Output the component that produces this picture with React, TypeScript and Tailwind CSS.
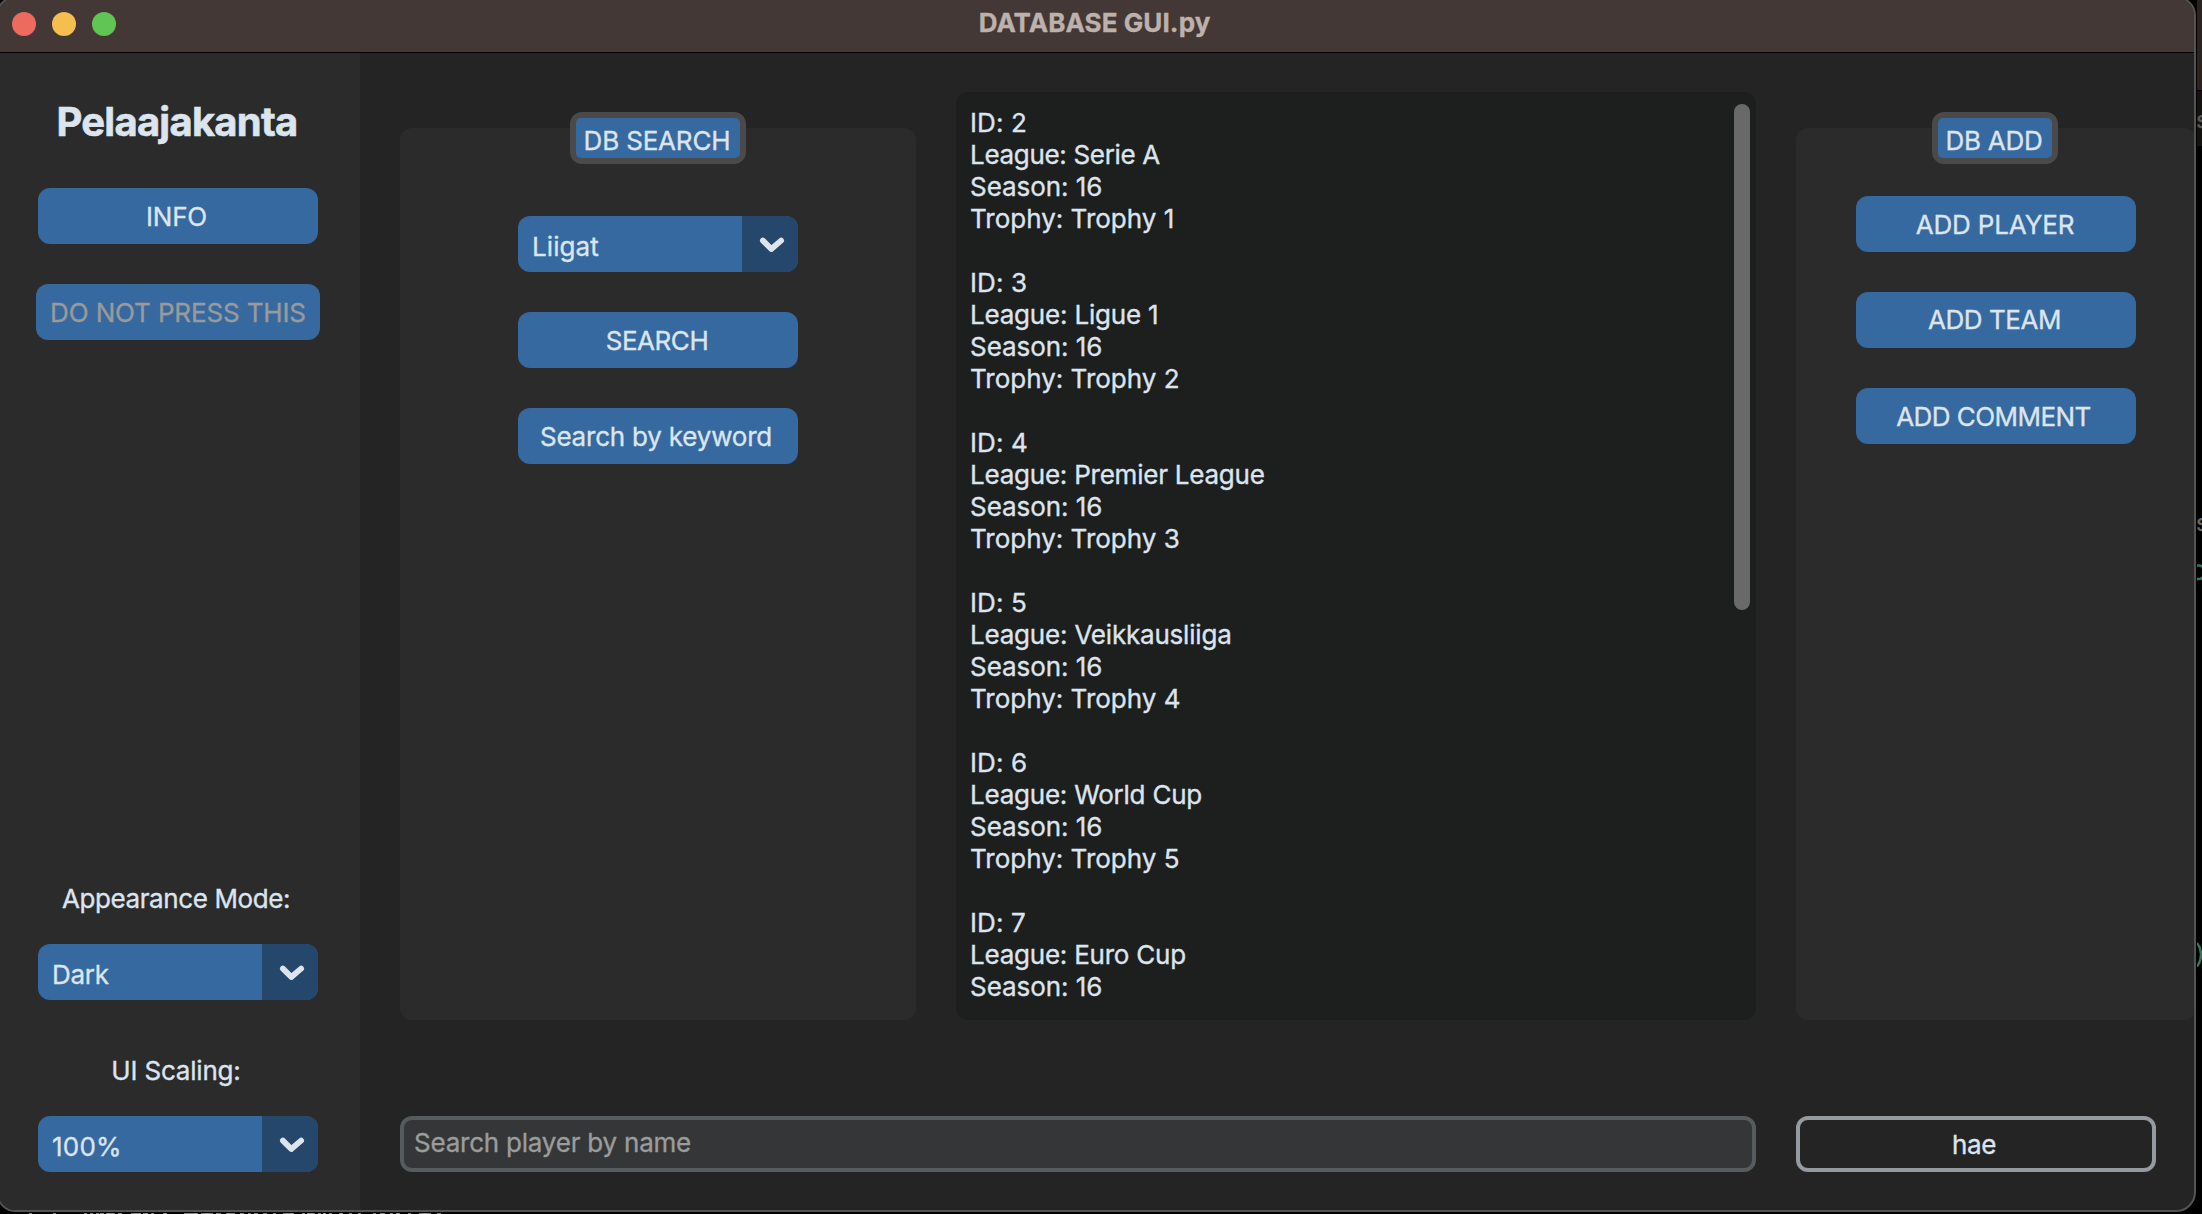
import type { ReactNode } from "react";

const leagues = [
  { id: 2, league: "Serie A", spacing: "tracking-[-0.32px]" },
  { id: 3, league: "Ligue 1", spacing: "tracking-[-0.2px]" },
  { id: 4, league: "Premier League", spacing: "tracking-[-0.23px]" },
  { id: 5, league: "Veikkausliiga", spacing: "tracking-[-0.2px]" },
  { id: 6, league: "World Cup", spacing: "tracking-[-0.23px]" },
  { id: 7, league: "Euro Cup", spacing: "tracking-[-0.23px]" },
];

// Tops of the glyph rows of the window behind, as [x, width].
const hiddenLine: [number, number][] = [
  [29, 3], [53, 3], [84, 3], [90, 3], [96, 3], [100, 4], [106, 9], [118, 4], [131, 10], [143, 5], [151, 3],
  [163, 4], [184, 14], [201, 12], [216, 5], [226, 9], [240, 4], [248, 3], [254, 4], [263, 4], [273, 3],
  [283, 11], [302, 3], [307, 8], [318, 3], [323, 3], [329, 3], [339, 4], [349, 3], [358, 3], [373, 3],
  [380, 5], [390, 3], [396, 4], [408, 3], [419, 12], [437, 4],
];

function Button({ children, className = "", label = "", wide = false, disabled = false }: { children: ReactNode; className?: string; label?: string; wide?: boolean; disabled?: boolean }) {
  return (
    <button
      disabled={disabled}
      className={`flex h-14 items-center justify-center whitespace-nowrap rounded-xl bg-[#36699f] ${wide ? "w-[284px]" : "w-[280px]"} ${disabled ? "text-[#999a99]" : "text-[#dce4ee]"} ${className}`}
    >
      <span className={label}>{children}</span>
    </button>
  );
}

function Select({ value, label }: { value: string; label: string }) {
  return (
    <button className="flex h-14 w-[280px] overflow-hidden rounded-xl bg-[#36699f] text-left text-[#dce4ee]">
      <span className={`flex-1 pl-3.5 pt-[5px] leading-[52px] ${label}`}>{value}</span>
      <span className="h-14 w-14 bg-[#24476b]">
        <svg width="56" height="56" viewBox="0 0 56 56" fill="none">
          <path d="M20.9 24.6 L29.3 33 L39.1 24.6" stroke="#dce4ee" strokeWidth="5.8" strokeLinecap="round" strokeLinejoin="round" />
        </svg>
      </span>
    </button>
  );
}

function Badge({ children, className }: { children: ReactNode; className: string }) {
  return (
    <div className={`-mt-4 h-[52px] flex-none rounded-xl border-[6px] border-[#4a4a4a] bg-[#4a4a4a] ${className}`}>
      <div className="flex h-10 items-center justify-center whitespace-nowrap rounded-[5px] bg-[#36699f] pr-[2px] pt-[5px]">{children}</div>
    </div>
  );
}

export default function App() {
  return (
    <div className="relative h-[1214px] w-[2202px] overflow-hidden bg-black font-['Inter',sans-serif] text-[26px] leading-8 text-[#dce4ee] [-webkit-text-stroke:0.35px]">
      <div className="absolute left-[2197px] top-0 h-[146px] w-[5px] bg-[#15110f]">
        <div className="h-[90px] bg-[#2c2220]" />
        <div className="h-px bg-black" />
      </div>
      <span className="absolute left-[2196px] top-[104px] text-[24px] text-[#5a5856]">s</span>
      <span className="absolute left-[2196px] top-[507px] text-[24px] text-[#676767]">s</span>
      <svg className="absolute left-[2197px] top-[560px]" width="5" height="24" fill="none" stroke="#2c7a5c" strokeWidth="2.4">
        <path d="M0 5.5H2.5Q5 5.5 6 8M0 19H2.5Q5 19 6 16.5" />
      </svg>
      <svg className="absolute left-[2197px] top-[942px]" width="5" height="26" fill="none" stroke="#2c7a5c" strokeWidth="2.4">
        <path d="M0 1Q4 6 4 12.5Q4 19 0 24.5" />
      </svg>
      <svg className="absolute left-0 top-[1213px]" width="450" height="1" fill="#8a8a8a">
        {hiddenLine.map(([x, w]) => (
          <rect key={x} x={x} y="0" width={w} height="1" />
        ))}
      </svg>

      <div className="relative -ml-1 -mt-1 flex h-[1216px] w-[2200px] flex-col overflow-hidden rounded-[20px] border-2 border-[#535353] bg-[#242424]">
        <header className="relative flex h-[55px] flex-none items-center border-b border-black bg-[#433835] pb-[3px] pl-3.5">
          <div className="flex gap-4">
            <span className="h-6 w-6 rounded-full bg-[#ed6a5e]" />
            <span className="h-6 w-6 rounded-full bg-[#f5bf4f]" />
            <span className="h-6 w-6 rounded-full bg-[#61c554]" />
          </div>
          <h1 className="absolute inset-x-0 top-[9px] pr-[3px] text-center font-bold tracking-[0.08px] text-[#bdb1ad]">DATABASE GUI.py</h1>
        </header>

        <div className="flex min-h-0 flex-1">
          <aside className="flex w-[362px] flex-none flex-col items-center bg-[#2b2b2b] pl-0.5">
            <h2 className="mt-[45px] h-12 pr-1.5 text-[40px] font-bold leading-[48px] tracking-[-0.76px] [-webkit-text-stroke:0.6px]">Pelaajakanta</h2>
            <div className="mt-[42px] flex w-full flex-col items-center gap-10 pr-1">
              <Button className="pr-[3px] pt-0.5" label="tracking-[-0.24px]">INFO</Button>
              <Button wide disabled className="pt-0.5" label="tracking-[-0.14px]">DO NOT PRESS THIS</Button>
            </div>
            <div className="mt-auto flex w-full flex-col items-center pb-[38px] pr-1">
              <span className="pr-1 tracking-[-0.4px]">Appearance Mode:</span>
              <div className="mb-[55px] mt-[29px]">
                <Select value="Dark" label="tracking-[-0.29px]" />
              </div>
              <span className="pr-1 tracking-[-0.19px]">UI Scaling:</span>
              <div className="mt-[29px]">
                <Select value="100%" label="tracking-[0.21px]" />
              </div>
            </div>
          </aside>

          <main className="flex min-w-0 flex-1 flex-col pl-10">
            <div className="flex h-[967px] flex-none gap-10">
              <section className="mt-[75px] flex w-[516px] flex-none flex-col items-center rounded-xl bg-[#2b2b2b]">
                <Badge className="w-44 tracking-[-0.18px]">DB SEARCH</Badge>
                <div className="mt-[52px] flex flex-col gap-10">
                  <Select value="Liigat" label="tracking-[0.09px]" />
                  <Button className="pr-0.5 pt-px" label="tracking-[-0.45px]">SEARCH</Button>
                  <Button className="pr-1 pt-px" label="tracking-[-0.2px]">Search by keyword</Button>
                </div>
              </section>

              <section className="mt-[39px] flex w-[800px] flex-none justify-between rounded-xl bg-[#1d1e1e] pl-3.5 pr-1.5 pt-3">
                <div className="h-[914px] overflow-hidden pt-[3px]">
                  {leagues.map((row) => (
                    <div key={row.id} className="mb-8">
                      <p className="tracking-[0.1px]">ID: {row.id}</p>
                      <p className={row.spacing}>League: {row.league}</p>
                      <p className="tracking-[-0.05px]">Season: 16</p>
                      {row.id < 7 && <p>Trophy: Trophy {row.id - 1}</p>}
                    </div>
                  ))}
                </div>
                <div className="h-[506px] w-4 rounded-full bg-[#696969]" />
              </section>

              <section className="mt-[75px] flex w-[400px] flex-none flex-col items-center rounded-xl bg-[#2b2b2b]">
                <Badge className="mr-0.5 w-[126px] tracking-[-0.24px]">DB ADD</Badge>
                <div className="mt-8 flex flex-col gap-10">
                  <Button className="pr-0.5 pt-px" label="tracking-[-0.15px]">ADD PLAYER</Button>
                  <Button className="pr-[3px]" label="tracking-[-0.45px]">ADD TEAM</Button>
                  <Button className="pr-[5px] pt-px" label="tracking-[-0.55px]">ADD COMMENT</Button>
                </div>
              </section>
            </div>

            <div className="mt-24 flex gap-10">
              <div className="h-14 w-[1356px] flex-none rounded-xl border-4 border-[#565b5e] bg-[#343638] pl-2.5 leading-[45px] tracking-[-0.22px] text-[#9b9c9b]">
                Search player by name
              </div>
              <button className="h-14 w-[360px] flex-none rounded-xl border-4 border-[#949a9f] pr-1 pt-px leading-[48px] tracking-[-0.34px]">hae</button>
            </div>
          </main>
        </div>
      </div>
    </div>
  );
}
